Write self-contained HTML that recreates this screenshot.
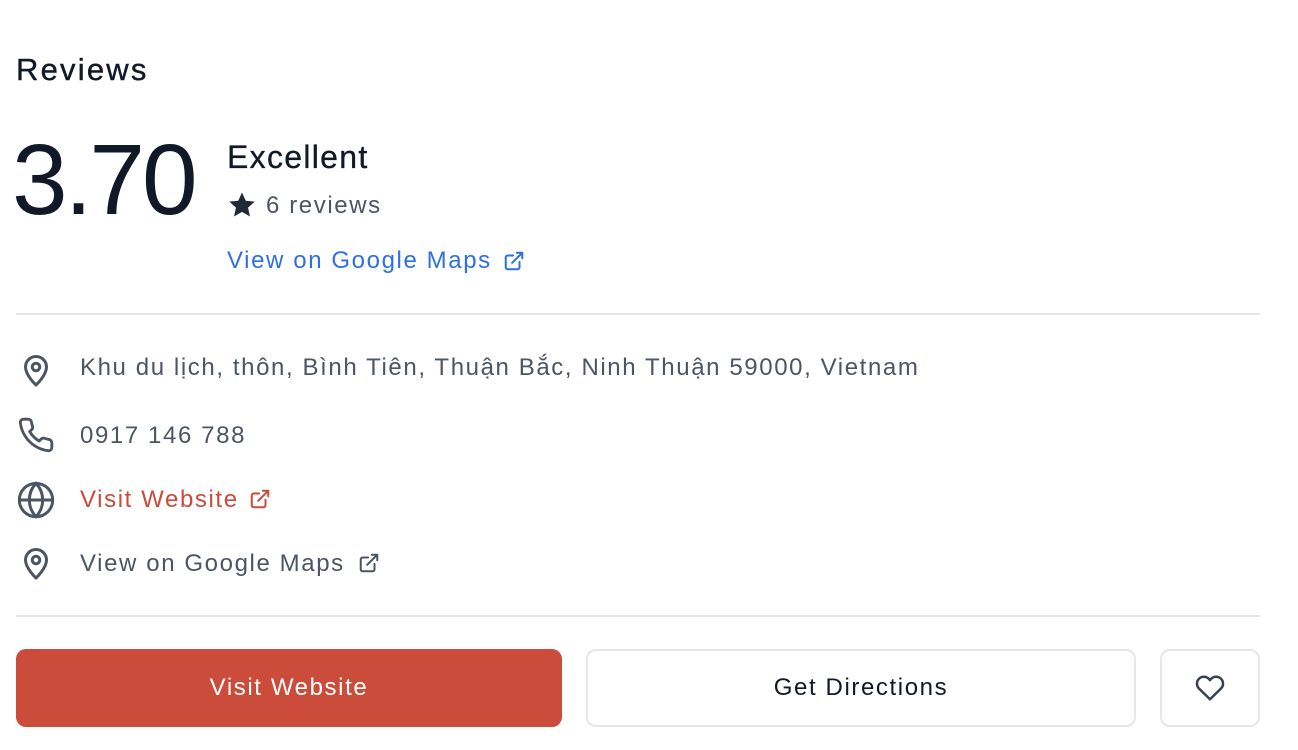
<!DOCTYPE html>
<html><head><meta charset="utf-8"><style>
body{margin:0;background:#fff;font-family:"Liberation Sans",sans-serif;width:1298px;height:750px;overflow:hidden;position:relative}
.a{position:absolute;white-space:nowrap;letter-spacing:1.6px}
.g{color:#4b5563;font-size:24px}
.hr{position:absolute;left:16px;width:1244px;height:2px;background:#e5e7eb}
svg{position:absolute}
.btn{position:absolute;top:649px;height:78px;border-radius:10px;box-sizing:border-box;display:flex;align-items:center;justify-content:center;font-size:24px;letter-spacing:1.6px}
</style></head><body>
<div class="a" style="left:16px;top:52px;font-size:31px;color:#111827;letter-spacing:2.2px;-webkit-text-stroke:0.4px #111827">Reviews</div>
<div class="a" style="left:12px;top:123px;font-size:100px;color:#111827;letter-spacing:-3px">3.70</div>
<div class="a" style="left:227px;top:139px;font-size:32px;color:#111827;letter-spacing:1.3px;-webkit-text-stroke:0.3px #111827">Excellent</div>
<svg style="left:226px;top:190px" width="32" height="30" viewBox="0 0 24 24"><path fill="#1f2937" d="M12 2l3 6.6 7.2.7-5.4 4.8 1.6 7.1L12 17.5 5.6 21.2l1.6-7.1L1.8 9.3 9 8.6z"/></svg>
<div class="a g" style="left:266px;top:192px">6 reviews</div>
<div class="a" style="left:227px;top:247px;font-size:24px;color:#2f6fe4">View on Google Maps</div>
<svg style="left:503px;top:250px" width="22" height="22" viewBox="0 0 24 24" fill="none" stroke="#2f6fe4" stroke-width="2.2" stroke-linecap="round" stroke-linejoin="round"><path d="M18 13v6a2 2 0 0 1-2 2H5a2 2 0 0 1-2-2V8a2 2 0 0 1 2-2h6M15 3h6v6M10 14L21 3"/></svg>
<div class="hr" style="top:313px"></div>
<svg style="left:18px;top:351px" width="36" height="38" viewBox="0 0 24 24" fill="none" stroke="#4b5563" stroke-width="2" stroke-linecap="round" stroke-linejoin="round"><path d="M12 22s-7-6.5-7-12a7 7 0 0 1 14 0c0 5.5-7 12-7 12z"/><circle cx="12" cy="10" r="2.5"/></svg>
<div class="a g" style="left:80px;top:354px">Khu du lịch, thôn, Bình Tiên, Thuận Bắc, Ninh Thuận 59000, Vietnam</div>
<svg style="left:17px;top:416px" width="38" height="38" viewBox="0 0 24 24" fill="none" stroke="#4b5563" stroke-width="1.8" stroke-linecap="round" stroke-linejoin="round"><path d="M22 16.9v3a2 2 0 0 1-2.2 2 19.8 19.8 0 0 1-8.6-3.1 19.5 19.5 0 0 1-6-6A19.8 19.8 0 0 1 2.1 4.2 2 2 0 0 1 4.1 2h3a2 2 0 0 1 2 1.7c.1 1 .4 1.9.7 2.8a2 2 0 0 1-.5 2.1L8 9.8a16 16 0 0 0 6 6l1.3-1.3a2 2 0 0 1 2.1-.4c.9.3 1.8.6 2.8.7a2 2 0 0 1 1.7 2z"/></svg>
<div class="a g" style="left:80px;top:422px">0917 146 788</div>
<svg style="left:16px;top:480px" width="40" height="40" viewBox="0 0 24 24" fill="none" stroke="#4b5563" stroke-width="1.8"><circle cx="12" cy="12" r="10"/><path d="M2 12h20M12 2c2.8 3 4 6.5 4 10s-1.2 7-4 10c-2.8-3-4-6.5-4-10s1.2-7 4-10z"/></svg>
<div class="a" style="left:80px;top:486px;font-size:24px;color:#cc4a3a">Visit Website</div>
<svg style="left:249px;top:488px" width="22" height="22" viewBox="0 0 24 24" fill="none" stroke="#cc4a3a" stroke-width="2.2" stroke-linecap="round" stroke-linejoin="round"><path d="M18 13v6a2 2 0 0 1-2 2H5a2 2 0 0 1-2-2V8a2 2 0 0 1 2-2h6M15 3h6v6M10 14L21 3"/></svg>
<svg style="left:18px;top:544px" width="36" height="38" viewBox="0 0 24 24" fill="none" stroke="#4b5563" stroke-width="2" stroke-linecap="round" stroke-linejoin="round"><path d="M12 22s-7-6.5-7-12a7 7 0 0 1 14 0c0 5.5-7 12-7 12z"/><circle cx="12" cy="10" r="2.5"/></svg>
<div class="a g" style="left:80px;top:550px">View on Google Maps</div>
<svg style="left:358px;top:552px" width="22" height="22" viewBox="0 0 24 24" fill="none" stroke="#4b5563" stroke-width="2.2" stroke-linecap="round" stroke-linejoin="round"><path d="M18 13v6a2 2 0 0 1-2 2H5a2 2 0 0 1-2-2V8a2 2 0 0 1 2-2h6M15 3h6v6M10 14L21 3"/></svg>
<div class="hr" style="top:615px"></div>
<div class="btn" style="left:16px;width:546px;background:#cb4c3a;color:#fff">Visit Website</div>
<div class="btn" style="left:586px;width:550px;border:2px solid #e5e7eb;color:#111827">Get Directions</div>
<div class="btn" style="left:1160px;width:100px;border:2px solid #e5e7eb">
<svg style="position:static" width="32" height="30" viewBox="0 0 24 24" fill="none" stroke="#374151" stroke-width="2" stroke-linejoin="round"><path d="M20.8 4.6a5.5 5.5 0 0 0-7.8 0L12 5.7l-1-1.1a5.5 5.5 0 0 0-7.8 7.8l1 1L12 21l7.8-7.6 1-1a5.5 5.5 0 0 0 0-7.8z"/></svg></div>
</body></html>
